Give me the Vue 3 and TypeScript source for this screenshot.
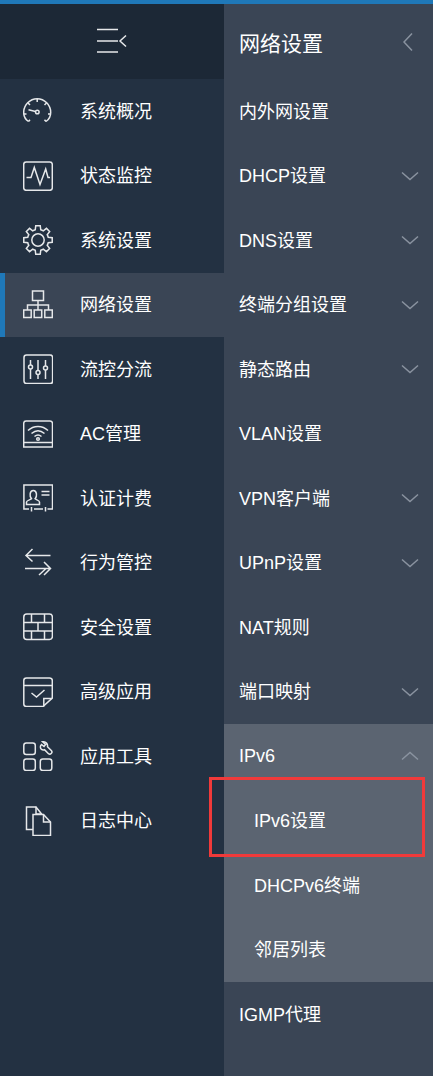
<script setup lang="ts">
interface MainItem {
  label: string
  icon: string
  active?: boolean
}

interface SubItem {
  label: string
  arrow?: boolean
  open?: boolean
  children?: string[]
}

const mainItems: MainItem[] = [
  { label: '系统概况', icon: 'gauge' },
  { label: '状态监控', icon: 'pulse' },
  { label: '系统设置', icon: 'gear' },
  { label: '网络设置', icon: 'network', active: true },
  { label: '流控分流', icon: 'sliders' },
  { label: 'AC管理', icon: 'wifi' },
  { label: '认证计费', icon: 'card' },
  { label: '行为管控', icon: 'arrows' },
  { label: '安全设置', icon: 'wall' },
  { label: '高级应用', icon: 'note' },
  { label: '应用工具', icon: 'tools' },
  { label: '日志中心', icon: 'files' },
]

const subItems: SubItem[] = [
  { label: '内外网设置' },
  { label: 'DHCP设置', arrow: true },
  { label: 'DNS设置', arrow: true },
  { label: '终端分组设置', arrow: true },
  { label: '静态路由', arrow: true },
  { label: 'VLAN设置' },
  { label: 'VPN客户端', arrow: true },
  { label: 'UPnP设置', arrow: true },
  { label: 'NAT规则' },
  { label: '端口映射', arrow: true },
  { label: 'IPv6', arrow: true, open: true, children: ['IPv6设置', 'DHCPv6终端', '邻居列表'] },
  { label: 'IGMP代理' },
]

// eight-tooth gear outline, centred in the 30x30 icon box
function buildGear(): string {
  const pt = (r: number, deg: number) => {
    const a = (deg * Math.PI) / 180
    return `${(15 + r * Math.cos(a)).toFixed(2)} ${(15 + r * Math.sin(a)).toFixed(2)}`
  }
  let d = ''
  for (let k = 0; k < 8; k++) {
    const a = k * 45 - 90
    d += `${k === 0 ? 'M' : 'L'}${pt(10.6, a - 15)}L${pt(14.4, a - 9)}L${pt(14.4, a + 9)}L${pt(10.6, a + 15)}`
    d += `A10.6 10.6 0 0 1 ${pt(10.6, a + 30)}`
  }
  return d + 'Z'
}

const gearPath = buildGear()
</script>

<template>
  <div class="page">
    <div class="topline"></div>
    <div class="columns">
      <nav class="main">
        <div class="main-head">
          <svg class="toggle" viewBox="0 0 32 26" width="32" height="26">
            <path d="M1 1.500H22M1 13H22M1 24H22M30 7.500L24 13L30 18.500" />
          </svg>
        </div>
        <div v-for="item in mainItems" :key="item.label" class="main-row" :class="{ active: item.active }">
          <svg class="icon" viewBox="0 0 30 30" width="30" height="30">
            <template v-if="item.icon === 'gauge'">
              <path d="M5.500 25.500C2.500 23.500.7 20 .7 16.500.7 9 6.800 2.800 14.200 2.800S27.700 9 27.700 16.500C27.700 20 26 23.500 23 25.500" />
              <path d="M5.500 13.800L12.500 15.500" />
              <circle cx="14.300" cy="16" r="1.800" />
              <path d="M14.200 3V6M5 7L7 9M23.500 7L21.500 9M.8 18H3.500M25 18H27.700M5.500 25.500L7 23.800M23 25.500L21.500 23.800" />
            </template>
            <template v-else-if="item.icon === 'pulse'">
              <rect x=".7" y="1" width="28.600" height="28.300" rx="2.500" />
              <path d="M3.500 16.500H8L11.300 6.500L17 23.500L22.700 8L25 16.500H27" />
            </template>
            <template v-else-if="item.icon === 'gear'">
              <path :d="gearPath" />
              <circle cx="15" cy="15" r="6.200" />
            </template>
            <template v-else-if="item.icon === 'network'">
              <rect x="9.500" y="1" width="11" height="9.500" />
              <path d="M15 10.500V15M4.500 20V15H25.500V20M15 15V20" />
              <rect x=".7" y="20" width="7.500" height="7.500" />
              <rect x="11.200" y="20" width="7.500" height="7.500" />
              <rect x="21.800" y="20" width="7.500" height="7.500" />
            </template>
            <template v-else-if="item.icon === 'sliders'">
              <rect x="1" y="1" width="28.600" height="28.600" rx="2.500" />
              <path d="M7.500 6V11M7.500 15V25M15 6V16.500M15 20.500V25M22.500 6V12M22.500 16V25" />
              <circle cx="7.500" cy="13" r="2" />
              <circle cx="15" cy="18.500" r="2" />
              <circle cx="22.500" cy="14" r="2" />
            </template>
            <template v-else-if="item.icon === 'wifi'">
              <path d="M3 2H27Q29.500 2 29.500 4.500V28H.7V4.500Q.7 2 3 2Z" />
              <path d="M.7 23.500H29.500" />
              <path d="M5 11.500C10.500 6 19.500 6 25 11.500M8.500 14.500C12.500 11 17.500 11 21.500 14.500M11.500 17.500C13.500 15.800 16.500 15.800 18.500 17.500" />
              <circle cx="15" cy="20" r="1.300" />
            </template>
            <template v-else-if="item.icon === 'card'">
              <path d="M6 26H.9V2H29.500V26H24.500M11 26H20" />
              <path d="M8.500 24V28.500M22.500 24V28.500" />
              <path d="M3.500 21.500V19C3.500 17.500 7.500 16.800 8.500 15.800C6.300 13.500 6.500 7.500 10.300 7.500S14.300 13.500 12.100 15.800C13.100 16.800 16.500 17.500 16.500 19V21.500Z" />
              <path d="M18.500 8.500H26.500M18.500 12H26.500" />
            </template>
            <template v-else-if="item.icon === 'arrows'">
              <path d="M27.500 7.500H3M9.500 1L3 7.500L9.500 13.500" />
              <path d="M2 20.500H27.500M21 14L27.500 20.500L21 27M16 27L23 20.500" />
            </template>
            <template v-else-if="item.icon === 'wall'">
              <rect x=".8" y="2" width="28.600" height="25.500" rx="3" />
              <path d="M.8 10.500H29.400M.8 19H29.400M8.500 2V10.500M21.500 2V10.500M15 10.500V19M8.500 19V27.500M21.500 19V27.500" />
            </template>
            <template v-else-if="item.icon === 'note'">
              <path d="M20 29.500H3.500Q.8 29.500.8 27V3.500Q.8 1 3.500 1H26.500Q29.300 1 29.300 3.500V21Z" />
              <path d="M.8 8.500H29.300M20.800 29.500V21.500H29" />
              <path d="M8.500 16L13.500 20L21.500 13" />
            </template>
            <template v-else-if="item.icon === 'tools'">
              <rect x=".8" y="2" width="11.500" height="11.500" rx="2.500" />
              <rect x=".8" y="18" width="11.500" height="11.500" rx="2.500" />
              <rect x="17.300" y="18" width="11.500" height="11.500" rx="2.500" />
              <path d="M19.500 .8L22.500 3.500L21 5.500L18.500 3.500C17 4.800 17 7.200 18.500 8.300C19.500 9 20.500 9 21.500 8.700L25.500 12.700C27.300 14.200 30 11.700 28.500 9.700L24.500 5.700C25 3.200 23 .3 19.500 .8Z" />
            </template>
            <template v-else>
              <path d="M10 23.500H3.500V1H13L19 8.500" />
              <path d="M13 .8V8H19" />
              <path d="M10 9H20.500L27.500 16.500V30H10Z" transform="translate(0 -.5)" />
              <path d="M20.500 8.500V16H27.500" />
            </template>
          </svg>
          <span class="main-label">{{ item.label }}</span>
        </div>
      </nav>

      <nav class="sub">
        <div class="sub-head">
          <span>网络设置</span>
          <svg class="chev-left" viewBox="0 0 10 18" width="10" height="18">
            <path d="M9 .5L1 9L9 17.500" />
          </svg>
        </div>
        <div v-for="item in subItems" :key="item.label" :class="{ expanded: item.open }">
          <div class="sub-row" :class="{ open: item.open }">
            <span>{{ item.label }}</span>
            <svg v-if="item.arrow" class="chev" :class="{ up: item.open }" viewBox="0 0 18 10" width="18" height="10">
              <path d="M1 1.500L9 8.500L17 1.500" />
            </svg>
          </div>
          <div v-for="child in item.children" :key="child" class="sub-row child">
            <span>{{ child }}</span>
          </div>
        </div>
      </nav>
    </div>
    <div class="highlight"></div>
  </div>
</template>

<style scoped>
.page {
  position: relative;
  width: 433px;
  height: 1076px;
  overflow: hidden;
  background: #3a4555;
  color: #fff;
  font-family: "Liberation Sans", "Noto Sans CJK SC", sans-serif;
  font-size: 18px;
}

.topline {
  height: 4px;
  background: #1f78b8;
}

.columns {
  display: flex;
  height: 1072px;
}

.main {
  width: 224px;
  flex: none;
  background: #233142;
}

.main-head {
  height: 75px;
  background: #1c2836;
  display: flex;
  align-items: center;
  justify-content: center;
}

.toggle {
  fill: none;
  stroke: #e6e8ea;
  stroke-width: 1.5;
  margin-top: -1px;
}

.main-row {
  display: flex;
  align-items: center;
  height: 64.5px;
  padding-left: 23px;
  gap: 27px;
}

.main-row.active {
  background: #3a4555;
  box-shadow: inset 5px 0 0 #1f78b8;
}

.main-label {
  margin-top: -3px;
}

.icon {
  flex: none;
  fill: none;
  stroke: #e6e8ea;
  stroke-width: 1.5;
}

.sub {
  flex: 1;
  background: #3a4555;
}

.sub-head {
  height: 75px;
  display: flex;
  align-items: center;
  justify-content: space-between;
  padding: 0 20px 0 15px;
  font-size: 21px;
}

.chev-left {
  fill: none;
  stroke: #8a93a0;
  stroke-width: 1.5;
}

.sub-row {
  display: flex;
  align-items: center;
  justify-content: space-between;
  height: 64.5px;
  padding: 0 14px 0 15px;
}

.sub-row span {
  margin-top: -3px;
}

.sub-row.open span {
  margin-top: 0;
}

.sub-row.child {
  padding-left: 30px;
}

.expanded {
  background: #5b6471;
}

.chev {
  fill: none;
  stroke: #8a93a0;
  stroke-width: 1.5;
}

.chev.up {
  transform: rotate(180deg);
}

.highlight {
  position: absolute;
  left: 209px;
  top: 777px;
  width: 216px;
  height: 80px;
  box-sizing: border-box;
  border: 3px solid #f03a3a;
}
</style>
